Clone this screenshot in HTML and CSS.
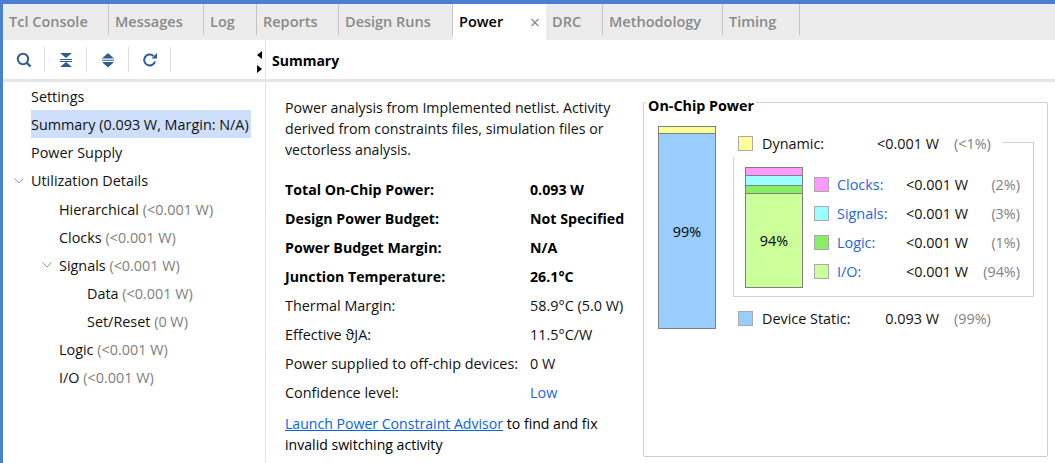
FILE: index.html
```html
<!DOCTYPE html>
<html lang="en">
<head>
  <meta charset="UTF-8">
  <title>Power</title>
  <link rel="stylesheet" href="styles.css">
</head>
<body>
  <div class="tabs">
    <div class="tab">Tcl Console</div>
    <div class="tab">Messages</div>
    <div class="tab">Log</div>
    <div class="tab">Reports</div>
    <div class="tab">Design Runs</div>
    <div class="tab active">Power <span class="close">×</span></div>
    <div class="tab">DRC</div>
    <div class="tab">Methodology</div>
    <div class="tab">Timing</div>
  </div>

  <div class="bars">
    <div class="toolbar">
      <button class="tool">
        <svg width="18" height="18" viewBox="0 0 18 18"><circle cx="8" cy="8" r="5.2" fill="none" stroke="#2f5d94" stroke-width="2"/><path d="M12 12l3.5 3.5" stroke="#2f5d94" stroke-width="2.4"/></svg>
      </button>
      <button class="tool">
        <svg width="18" height="18" viewBox="0 0 18 18"><path d="M3 2h12L9 7zM3 16h12L9 11z" fill="#2f5d94"/><path d="M3 8.500h12M3 10.500h12" stroke="#2f5d94"/></svg>
      </button>
      <button class="tool">
        <svg width="18" height="18" viewBox="0 0 18 18"><path d="M9 2l6 5.500H3zM9 16.500l6-5.500H3z" fill="#2f5d94"/><path d="M3 9.250h12" stroke="#2f5d94"/></svg>
      </button>
      <button class="tool">
        <svg width="18" height="18" viewBox="0 0 18 18"><path d="M14 10.500A5.500 5.500 0 1 1 12.500 5" fill="none" stroke="#2f5d94" stroke-width="2"/><path d="M10.500 7.500h5.500v-5.500z" fill="#2f5d94"/></svg>
      </button>
      <div class="splitter"><span class="arrow-left"></span><span class="arrow-right"></span></div>
    </div>
    <div class="heading">Summary</div>
  </div>

  <div class="main">
    <ul class="tree">
      <li class="lvl0">Settings</li>
      <li class="lvl0 selected">Summary (0.093 W, Margin: N/A)</li>
      <li class="lvl0">Power Supply</li>
      <li class="lvl0"><svg class="chev" width="12" height="12" viewBox="0 0 12 12"><path d="M1.500 3.500L6 8l4.500-4.500" fill="none" stroke="#999"/></svg>Utilization Details</li>
      <li class="lvl1">Hierarchical <span class="dim">(&lt;0.001 W)</span></li>
      <li class="lvl1">Clocks <span class="dim">(&lt;0.001 W)</span></li>
      <li class="lvl1"><svg class="chev" width="12" height="12" viewBox="0 0 12 12"><path d="M1.500 3.500L6 8l4.500-4.500" fill="none" stroke="#999"/></svg>Signals <span class="dim">(&lt;0.001 W)</span></li>
      <li class="lvl2">Data <span class="dim">(&lt;0.001 W)</span></li>
      <li class="lvl2">Set/Reset <span class="dim">(0 W)</span></li>
      <li class="lvl1">Logic <span class="dim">(&lt;0.001 W)</span></li>
      <li class="lvl1">I/O <span class="dim">(&lt;0.001 W)</span></li>
    </ul>

    <div class="summary">
      <p class="intro">Power analysis from Implemented netlist. Activity derived from constraints files, simulation files or vectorless analysis.</p>
      <div class="facts">
        <div class="fact strong"><span>Total On-Chip Power:</span><span>0.093 W</span></div>
        <div class="fact strong"><span>Design Power Budget:</span><span>Not Specified</span></div>
        <div class="fact strong"><span>Power Budget Margin:</span><span>N/A</span></div>
        <div class="fact strong"><span>Junction Temperature:</span><span>26.1°C</span></div>
        <div class="fact"><span>Thermal Margin:</span><span>58.9°C (5.0 W)</span></div>
        <div class="fact"><span>Effective ϑJA:</span><span>11.5°C/W</span></div>
        <div class="fact"><span>Power supplied to off-chip devices:</span><span>0 W</span></div>
        <div class="fact"><span>Confidence level:</span><span class="blue">Low</span></div>
      </div>
      <p class="advisor"><a href="#">Launch Power Constraint Advisor</a> to find and fix invalid switching activity</p>
    </div>

    <fieldset class="chip">
      <legend>On-Chip Power</legend>
      <div class="chip-inner">
        <div class="stack big">
          <div class="seg yellow top-seg"></div>
          <div class="seg blue-fill grow">99%</div>
        </div>
        <div class="detail">
          <div class="group">
            <div class="row top-row"><i class="sw yellow"></i><span class="name">Dynamic:</span><span class="val">&lt;0.001 W</span><span class="pct">(&lt;1%)</span></div>
            <div class="dyn">
              <div class="stack small">
                <div class="seg pink clocks-seg"></div>
                <div class="seg cyan signals-seg"></div>
                <div class="seg green logic-seg"></div>
                <div class="seg lime grow">94%</div>
              </div>
              <div class="legend">
                <div class="row"><i class="sw pink"></i><span class="name blue">Clocks:</span><span class="val">&lt;0.001 W</span><span class="pct">(2%)</span></div>
                <div class="row"><i class="sw cyan"></i><span class="name blue">Signals:</span><span class="val">&lt;0.001 W</span><span class="pct">(3%)</span></div>
                <div class="row"><i class="sw green"></i><span class="name blue">Logic:</span><span class="val">&lt;0.001 W</span><span class="pct">(1%)</span></div>
                <div class="row"><i class="sw lime"></i><span class="name blue">I/O:</span><span class="val">&lt;0.001 W</span><span class="pct">(94%)</span></div>
              </div>
            </div>
          </div>
          <div class="row static-row"><i class="sw blue-fill"></i><span class="name">Device Static:</span><span class="val">0.093 W</span><span class="pct">(99%)</span></div>
        </div>
      </div>
    </fieldset>
  </div>
</body>
</html>
```

FILE: styles.css
```css
body {
  margin: 0;
  height: 463px;
  overflow: hidden;
  display: flex;
  flex-direction: column;
  box-sizing: border-box;
  border-top: 4px solid #4c7fd1;
  border-left: 3px solid #4c7fd1;
  background: white;
  font-family: "Open Sans", sans-serif;
  font-size: 14.4px;
  color: #111;
}

.tabs {
  display: grid;
  grid-template-columns: 106px 95px 53px 82px 114px 93px 57px 120px 77px;
  height: 36px;
  background: #ececec;
  flex: none;
}
.tab {
  box-sizing: border-box;
  padding: 8px 0 0 6px;
  height: 31px;
  border-right: 1px solid #c4c4c4;
  font-weight: 600;
  font-size: 14.5px;
  color: #8a8a8a;
  white-space: nowrap;
}
.tab.active {
  background: white;
  height: 36px;
  color: black;
  border-right: none;
  padding-right: 6px;
  display: flex;
  justify-content: space-between;
}
.close {
  font-weight: 400;
  font-size: 18px;
  line-height: 20px;
  color: #888;
}

.bars {
  display: flex;
  height: 39px;
  flex: none;
  border-bottom: 3px solid #e6e6e6;
}
.toolbar {
  width: 263px;
  display: flex;
  align-items: center;
  box-sizing: border-box;
  position: relative;
  border-right: 1px solid #e0e0e0;
}
.tool {
  width: 42px;
  height: 25px;
  padding: 0;
  background: none;
  border: none;
  border-right: 1px solid #ddd;
}
.tool svg {
  display: block;
  margin: 0 auto;
}
.splitter {
  position: absolute;
  right: 3px;
  top: 11px;
  display: flex;
  flex-direction: column;
  gap: 6px;
}
.arrow-left, .arrow-right {
  display: block;
  width: 0;
  height: 0;
  border-top: 4.500px solid transparent;
  border-bottom: 4.500px solid transparent;
}
.arrow-left { border-right: 5px solid black; }
.arrow-right { border-left: 5px solid black; }
.heading {
  padding: 11px 0 0 6px;
  font-weight: 700;
  font-size: 14px;
  color: black;
}

.main {
  display: flex;
  flex: 1;
  min-height: 0;
}
.tree {
  list-style: none;
  margin: 0;
  padding: 0;
  width: 263px;
  box-sizing: border-box;
  border-right: 1px solid #e0e0e0;
  flex: none;
}
.tree li {
  height: 28px;
  line-height: 31px;
  position: relative;
  white-space: nowrap;
}
.tree .lvl0 {
  padding-left: 28px;
  line-height: 29px;
}
.lvl1 { padding-left: 56px; }
.lvl2 { padding-left: 84px; }
.tree .selected {
  background: #cddffb;
  width: 220px;
  padding-left: 0;
  margin-left: 28px;
}
.chev {
  position: absolute;
  margin-left: -18px;
  top: 9px;
}
.dim { color: #808080; }

.summary {
  width: 345px;
  padding: 0 0 0 19px;
  flex: none;
}
.intro {
  margin: 15px 0 15px;
  font-size: 14.200px;
  line-height: 21px;
}
.fact {
  display: flex;
  height: 29px;
  line-height: 29px;
  white-space: nowrap;
}
.fact span:first-child {
  width: 245px;
}
.strong {
  font-weight: 700;
  font-size: 14.200px;
  color: black;
}
.blue { color: #1f66e0; }
.advisor {
  margin: 6px 0 0;
  font-size: 14.100px;
  line-height: 21px;
  color: black;
}
.advisor a { color: #0563e6; }

.chip {
  margin: 10px 7px 6px 13px;
  padding: 0;
  flex: 1;
  min-width: 0;
  border: 1px solid #cfcfcf;
  border-radius: 2px;
}
.chip legend {
  padding: 7px 2px 0;
  margin-left: 2px;
  font-weight: 700;
  font-size: 14.300px;
  line-height: 14px;
  color: black;
}
.chip-inner {
  display: flex;
  padding: 13px 0 0 14px;
}
.stack {
  display: flex;
  flex-direction: column;
  border: 1px solid #808080;
  box-sizing: border-box;
  width: 58px;
  flex: none;
}
.stack.big { height: 203px; }
.stack.small { height: 121px; }
.seg + .seg { border-top: 1px solid #808080; }
.top-seg { height: 6px; }
.clocks-seg { height: 7px; }
.signals-seg { height: 9px; }
.logic-seg { height: 7px; }
.seg.grow {
  flex: 1;
  display: flex;
  align-items: center;
  justify-content: center;
  color: black;
}
.yellow { background: #ffff99; }
.blue-fill { background: #99ccff; }
.pink { background: #ff99ff; }
.cyan { background: #99ffff; }
.green { background: #88ee66; }
.lime { background: #ccff99; }

.detail {
  margin: 3px 13px 0 17px;
  flex: 1;
}
.group {
  position: relative;
}
.group::before {
  content: "";
  position: absolute;
  top: 13px;
  right: 0;
  bottom: 0;
  width: 30px;
  border-top: 1px solid #cfcfcf;
  border-right: 1px solid #cfcfcf;
}
.row {
  display: flex;
  align-items: center;
  height: 29px;
  white-space: nowrap;
}
.sw {
  width: 13px;
  height: 13px;
  border: 1px solid #aaa;
  flex: none;
}
.val {
  width: 62px;
  text-align: right;
}
.pct {
  color: #808080;
}
.top-row, .static-row {
  padding-left: 5px;
}
.top-row .name, .static-row .name {
  margin-left: 9px;
  width: 115px;
}
.top-row .pct, .static-row .pct {
  margin-left: 15px;
}
.dyn {
  display: flex;
  margin-top: -1px;
  height: 140px;
  padding: 10px 0 0 11px;
  box-sizing: border-box;
  border-left: 1px solid #cfcfcf;
  border-bottom: 1px solid #cfcfcf;
}
.legend {
  flex: 1;
  margin-left: 11px;
  margin-top: 3px;
}
.legend .name {
  margin-left: 8px;
  width: 69px;
}
.legend .pct {
  margin-left: auto;
  margin-right: 14px;
}
.static-row {
  margin-top: 7px;
}
```
